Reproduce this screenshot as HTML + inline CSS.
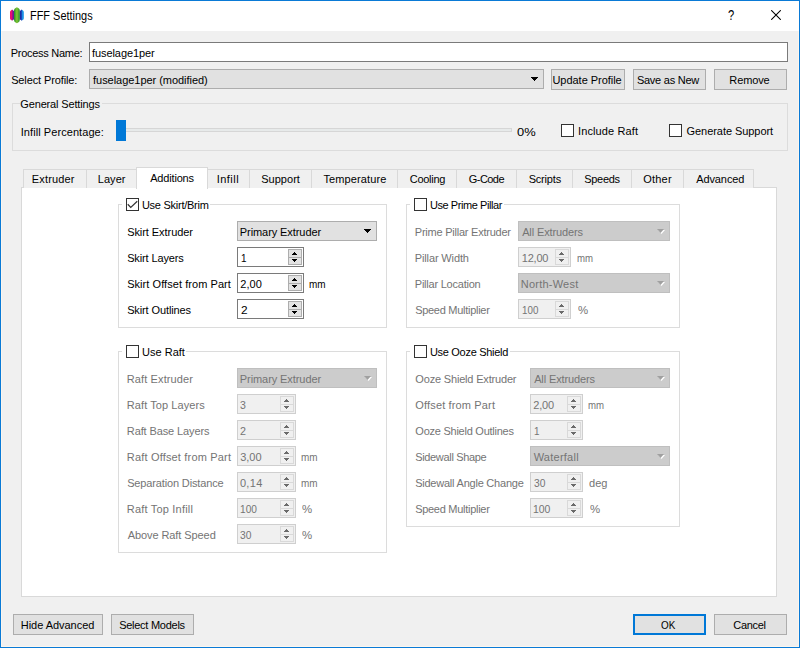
<!DOCTYPE html>
<html><head><meta charset="utf-8"><title>FFF Settings</title>
<style>
*{box-sizing:border-box;margin:0;padding:0}
html,body{width:800px;height:648px;overflow:hidden}
body{position:relative;background:#f0f0f0;font-family:"Liberation Sans",sans-serif;font-size:11px;color:#000}
.a{position:absolute}
.t{position:absolute;white-space:nowrap;line-height:14px;height:14px;z-index:4;transform-origin:0 0}
#frame{left:0;top:0;width:800px;height:648px;border:1px solid #0a7ad6;z-index:50}
#frame2{left:1px;top:1px;width:798px;height:646px;border:1px solid #fbf6ef;z-index:1}
#title{left:1px;top:1px;width:798px;height:30px;background:#fff;z-index:2}
.btn{position:absolute;height:21px;border:1px solid #adadad;background:#e1e1e1}
.combo{position:absolute;height:20px;border:1px solid #adadad;background:#e1e1e1}
.combo.d{background:#cccccc;border-color:#bfbfbf}
.cb{position:absolute;width:13px;height:13px;border:1px solid #333;background:#fff}
.cb svg{position:absolute;left:0;top:0}
.gb{position:absolute;border:1px solid #dcdcdc}
.spin{position:absolute;height:20px;border:1px solid #7a7a7a;background:#fff}
.spin.d{border-color:#cfcfcf;background:#f0f0f0}
.sb{position:absolute;right:1px;top:1px;width:14px;height:16px;border:1px solid #adadad;background:#e3e3e3}
.sb svg{position:absolute;left:0;top:0;fill:#000}
.sb::after{content:"";position:absolute;left:0;right:0;top:7px;height:1px;background:#adadad}
.spin.d .sb{border-color:#d9d9d9;background:#f0f0f0}
.spin.d .sb::after{background:#d9d9d9}
.spin.d .sb svg{fill:#6a6a6a}
.tab{position:absolute;top:169px;height:19px;border:1px solid #d9d9d9;border-bottom:none;background:#f0f0f0}
.tab.sel{top:167px;height:22px;background:#fff;z-index:3}
.pane{position:absolute;left:21px;top:187px;width:756px;height:410px;background:#fff;border:1px solid #d9d9d9}
</style></head><body>
<div class="a" id="frame2"></div>
<div class="a" id="title">
<svg class="a" style="left:8px;top:5px" width="16" height="20" viewBox="0 0 16 20">
<defs>
<linearGradient id="g1" x1="0" x2="1"><stop offset="0" stop-color="#d80f78"/><stop offset=".3" stop-color="#ff0a6c"/><stop offset=".65" stop-color="#8a1890"/><stop offset="1" stop-color="#5518a0"/></linearGradient>
<linearGradient id="g2" x1="0" x2="1"><stop offset="0" stop-color="#1f8c2c"/><stop offset=".5" stop-color="#86c832"/><stop offset="1" stop-color="#1f8c2c"/></linearGradient>
<linearGradient id="g3" x1="0" x2="1"><stop offset="0" stop-color="#1a1f98"/><stop offset=".4" stop-color="#1a38b0"/><stop offset=".75" stop-color="#18a4f2"/><stop offset="1" stop-color="#1688dc"/></linearGradient>
</defs>
<path d="M3.1 3.6L4 4.3Q5.2 4.7 5.2 6.2V12.2Q5.2 13.7 4 14.1L3.1 14.8L2.2 14.1Q1 13.7 1 12.2V6.2Q1 4.7 2.2 4.3Z" fill="url(#g1)"/>
<path d="M12.7 3.6L13.6 4.3Q14.8 4.7 14.8 6.2V12.2Q14.8 13.7 13.6 14.1L12.7 14.8L11.8 14.1Q10.6 13.7 10.6 12.2V6.2Q10.6 4.7 11.8 4.3Z" fill="url(#g3)"/>
<path d="M7.9 1.2L9.2 2Q10.8 2.6 10.8 4.6V13.8Q10.8 15.8 9.2 16.4L7.9 17.2L6.6 16.4Q5 15.8 5 13.8V4.6Q5 2.6 6.6 2Z" fill="url(#g2)"/>
</svg>
<div class="t" style="left:727.3px;top:7px;font-size:14px;transform:scaleX(.8);transform-origin:0 0">?</div>
<svg class="a" style="left:770px;top:9px" width="10" height="10" viewBox="0 0 10 10"><path d="M0.2 0.2L9.8 9.8M9.8 0.2L0.2 9.8" stroke="#000" stroke-width="1.05" fill="none"/></svg>
</div>

<div class="a" style="left:89px;top:42px;width:699px;height:20px;border:1px solid #7a7a7a;background:#fff"></div>
<div class="combo" style="left:89px;top:69px;width:455px"><svg class="a" style="right:5px;top:7px" width="7" height="4" viewBox="0 0 7 4" shape-rendering="crispEdges"><path d="M0 0h7v1h-1v1h-1v1h-1v1h-1v-1h-1v-1h-1v-1h-1z" fill="#000"/></svg></div>
<div class="btn" style="left:551px;top:69px;width:74px"></div>
<div class="btn" style="left:633px;top:69px;width:73px"></div>
<div class="btn" style="left:714px;top:69px;width:73px"></div>

<div class="gb" style="left:12px;top:103px;width:776px;height:48px"></div>
<div class="a" style="left:20px;top:97px;width:82px;height:12px;background:#f0f0f0"></div>
<div class="a" style="left:116px;top:128px;width:396px;height:4px;background:#e7eaea;border:1px solid #d6d6d6"></div>
<div class="a" style="left:116px;top:120px;width:10px;height:21px;background:#0078d7"></div>
<div class="cb" style="left:561px;top:124px"></div>
<div class="cb" style="left:669px;top:124px"></div>

<div class="pane"></div>
<div class="tab" style="left:23px;width:64px"></div>
<div class="tab" style="left:86px;width:51px"></div>
<div class="tab sel" style="left:136px;width:72px"></div>
<div class="tab" style="left:207px;width:43px"></div>
<div class="tab" style="left:249px;width:63px"></div>
<div class="tab" style="left:311px;width:87px"></div>
<div class="tab" style="left:397px;width:60px"></div>
<div class="tab" style="left:456px;width:61px"></div>
<div class="tab" style="left:516px;width:57px"></div>
<div class="tab" style="left:572px;width:60px"></div>
<div class="tab" style="left:631px;width:53px"></div>
<div class="tab" style="left:683px;width:71px"></div>

<div class="btn" style="left:13px;top:614px;width:90px"></div>
<div class="btn" style="left:111px;top:614px;width:83px"></div>
<div class="btn" style="left:633px;top:614px;width:73px;border:2px solid #0078d7"></div>
<div class="btn" style="left:714px;top:614px;width:73px"></div>
<div class="gb" style="left:118px;top:204px;width:269px;height:124px"></div>
<div class="a" style="left:122px;top:196px;width:88px;height:16px;background:#fff"></div>
<div class="cb" style="left:126px;top:198px"><svg width="11" height="11" viewBox="0 0 11 11" style="position:absolute;left:0;top:0"><path d="M0.75 5.25L3.75 8.5L10.25 2.25" stroke="#333" stroke-width="1.2" fill="none"/></svg></div>
<div class="combo" style="left:237px;top:221px;width:140px;height:20px"><svg class="a" style="right:5px;top:7px" width="7" height="4" viewBox="0 0 7 4" shape-rendering="crispEdges"><path d="M0 0h7v1h-1v1h-1v1h-1v1h-1v-1h-1v-1h-1v-1h-1z" fill="#000"/></svg></div>
<div class="spin" style="left:237px;top:247px;width:67px"><span class="sb"><svg width="12" height="14" viewBox="0 0 12 14" shape-rendering="crispEdges"><path d="M5 2h1v1h1v1h1v1h-5v-1h1v-1h1z M3 9h5v1h-1v1h-1v1h-1v-1h-1v-1h-1z"/></svg></span></div>
<div class="spin" style="left:237px;top:273px;width:67px"><span class="sb"><svg width="12" height="14" viewBox="0 0 12 14" shape-rendering="crispEdges"><path d="M5 2h1v1h1v1h1v1h-5v-1h1v-1h1z M3 9h5v1h-1v1h-1v1h-1v-1h-1v-1h-1z"/></svg></span></div>
<div class="spin" style="left:237px;top:299px;width:67px"><span class="sb"><svg width="12" height="14" viewBox="0 0 12 14" shape-rendering="crispEdges"><path d="M5 2h1v1h1v1h1v1h-5v-1h1v-1h1z M3 9h5v1h-1v1h-1v1h-1v-1h-1v-1h-1z"/></svg></span></div>
<div class="gb" style="left:406px;top:204px;width:274px;height:124px"></div>
<div class="a" style="left:410px;top:196px;width:94px;height:16px;background:#fff"></div>
<div class="cb" style="left:414px;top:198px"></div>
<div class="combo d" style="left:518px;top:221px;width:152px;height:20px"><svg class="a" style="right:4px;top:7px" width="8" height="5" viewBox="0 0 8 5"><path d="M1 1h7l-3.5 4z" fill="#fff"/><path d="M0 0h7l-3.5 4z" fill="#a0a0a0"/></svg></div>
<div class="spin d" style="left:518px;top:247px;width:53px"><span class="sb"><svg width="12" height="14" viewBox="0 0 12 14" shape-rendering="crispEdges"><path d="M5 2h1v1h1v1h1v1h-5v-1h1v-1h1z M3 9h5v1h-1v1h-1v1h-1v-1h-1v-1h-1z"/></svg></span></div>
<div class="combo d" style="left:518px;top:273px;width:152px;height:20px"><svg class="a" style="right:4px;top:7px" width="8" height="5" viewBox="0 0 8 5"><path d="M1 1h7l-3.5 4z" fill="#fff"/><path d="M0 0h7l-3.5 4z" fill="#a0a0a0"/></svg></div>
<div class="spin d" style="left:518px;top:299px;width:53px"><span class="sb"><svg width="12" height="14" viewBox="0 0 12 14" shape-rendering="crispEdges"><path d="M5 2h1v1h1v1h1v1h-5v-1h1v-1h1z M3 9h5v1h-1v1h-1v1h-1v-1h-1v-1h-1z"/></svg></span></div>
<div class="gb" style="left:118px;top:351px;width:269px;height:202px"></div>
<div class="a" style="left:122px;top:343px;width:64px;height:16px;background:#fff"></div>
<div class="cb" style="left:126px;top:345px"></div>
<div class="combo d" style="left:237px;top:368px;width:140px;height:20px"><svg class="a" style="right:4px;top:7px" width="8" height="5" viewBox="0 0 8 5"><path d="M1 1h7l-3.5 4z" fill="#fff"/><path d="M0 0h7l-3.5 4z" fill="#a0a0a0"/></svg></div>
<div class="spin d" style="left:237px;top:394px;width:59px"><span class="sb"><svg width="12" height="14" viewBox="0 0 12 14" shape-rendering="crispEdges"><path d="M5 2h1v1h1v1h1v1h-5v-1h1v-1h1z M3 9h5v1h-1v1h-1v1h-1v-1h-1v-1h-1z"/></svg></span></div>
<div class="spin d" style="left:237px;top:420px;width:59px"><span class="sb"><svg width="12" height="14" viewBox="0 0 12 14" shape-rendering="crispEdges"><path d="M5 2h1v1h1v1h1v1h-5v-1h1v-1h1z M3 9h5v1h-1v1h-1v1h-1v-1h-1v-1h-1z"/></svg></span></div>
<div class="spin d" style="left:237px;top:446px;width:59px"><span class="sb"><svg width="12" height="14" viewBox="0 0 12 14" shape-rendering="crispEdges"><path d="M5 2h1v1h1v1h1v1h-5v-1h1v-1h1z M3 9h5v1h-1v1h-1v1h-1v-1h-1v-1h-1z"/></svg></span></div>
<div class="spin d" style="left:237px;top:472px;width:59px"><span class="sb"><svg width="12" height="14" viewBox="0 0 12 14" shape-rendering="crispEdges"><path d="M5 2h1v1h1v1h1v1h-5v-1h1v-1h1z M3 9h5v1h-1v1h-1v1h-1v-1h-1v-1h-1z"/></svg></span></div>
<div class="spin d" style="left:237px;top:498px;width:59px"><span class="sb"><svg width="12" height="14" viewBox="0 0 12 14" shape-rendering="crispEdges"><path d="M5 2h1v1h1v1h1v1h-5v-1h1v-1h1z M3 9h5v1h-1v1h-1v1h-1v-1h-1v-1h-1z"/></svg></span></div>
<div class="spin d" style="left:237px;top:524px;width:59px"><span class="sb"><svg width="12" height="14" viewBox="0 0 12 14" shape-rendering="crispEdges"><path d="M5 2h1v1h1v1h1v1h-5v-1h1v-1h1z M3 9h5v1h-1v1h-1v1h-1v-1h-1v-1h-1z"/></svg></span></div>
<div class="gb" style="left:406px;top:351px;width:274px;height:176px"></div>
<div class="a" style="left:410px;top:343px;width:100px;height:16px;background:#fff"></div>
<div class="cb" style="left:414px;top:345px"></div>
<div class="combo d" style="left:530px;top:368px;width:140px;height:20px"><svg class="a" style="right:4px;top:7px" width="8" height="5" viewBox="0 0 8 5"><path d="M1 1h7l-3.5 4z" fill="#fff"/><path d="M0 0h7l-3.5 4z" fill="#a0a0a0"/></svg></div>
<div class="spin d" style="left:530px;top:394px;width:53px"><span class="sb"><svg width="12" height="14" viewBox="0 0 12 14" shape-rendering="crispEdges"><path d="M5 2h1v1h1v1h1v1h-5v-1h1v-1h1z M3 9h5v1h-1v1h-1v1h-1v-1h-1v-1h-1z"/></svg></span></div>
<div class="spin d" style="left:530px;top:420px;width:53px"><span class="sb"><svg width="12" height="14" viewBox="0 0 12 14" shape-rendering="crispEdges"><path d="M5 2h1v1h1v1h1v1h-5v-1h1v-1h1z M3 9h5v1h-1v1h-1v1h-1v-1h-1v-1h-1z"/></svg></span></div>
<div class="combo d" style="left:530px;top:446px;width:140px;height:20px"><svg class="a" style="right:4px;top:7px" width="8" height="5" viewBox="0 0 8 5"><path d="M1 1h7l-3.5 4z" fill="#fff"/><path d="M0 0h7l-3.5 4z" fill="#a0a0a0"/></svg></div>
<div class="spin d" style="left:530px;top:472px;width:53px"><span class="sb"><svg width="12" height="14" viewBox="0 0 12 14" shape-rendering="crispEdges"><path d="M5 2h1v1h1v1h1v1h-5v-1h1v-1h1z M3 9h5v1h-1v1h-1v1h-1v-1h-1v-1h-1z"/></svg></span></div>
<div class="spin d" style="left:530px;top:498px;width:53px"><span class="sb"><svg width="12" height="14" viewBox="0 0 12 14" shape-rendering="crispEdges"><path d="M5 2h1v1h1v1h1v1h-5v-1h1v-1h1z M3 9h5v1h-1v1h-1v1h-1v-1h-1v-1h-1z"/></svg></span></div>
<div class="t" style="left:30.39px;top:9px;font-size:12px;transform:scaleX(0.912);">FFF Settings</div>
<div class="t" style="left:10.80px;top:46px;letter-spacing:-0.287px;">Process Name:</div>
<div class="t" style="left:92.07px;top:46px;letter-spacing:-0.087px;">fuselage1per</div>
<div class="t" style="left:11.14px;top:73px;letter-spacing:-0.114px;">Select Profile:</div>
<div class="t" style="left:93.07px;top:73px;letter-spacing:-0.040px;">fuselage1per (modified)</div>
<div class="t" style="left:552.46px;top:73px;letter-spacing:-0.035px;">Update Profile</div>
<div class="t" style="left:636.88px;top:73px;letter-spacing:-0.248px;">Save as New</div>
<div class="t" style="left:729.30px;top:73px;letter-spacing:-0.108px;">Remove</div>
<div class="t" style="left:20.30px;top:97px;letter-spacing:-0.149px;">General Settings</div>
<div class="t" style="left:20.76px;top:125px;letter-spacing:0.066px;">Infill Percentage:</div>
<div class="t" style="left:517.07px;top:125px;transform:scaleX(1.173);">0%</div>
<div class="t" style="left:578.01px;top:124px;letter-spacing:0.115px;">Include Raft</div>
<div class="t" style="left:686.55px;top:124px;letter-spacing:-0.056px;">Generate Support</div>
<div class="t" style="left:31.80px;top:172px;letter-spacing:0.163px;z-index:5;">Extruder</div>
<div class="t" style="left:97.80px;top:172px;letter-spacing:0.035px;z-index:5;">Layer</div>
<div class="t" style="left:150.16px;top:171px;letter-spacing:-0.170px;z-index:5;">Additions</div>
<div class="t" style="left:216.76px;top:172px;letter-spacing:0.456px;z-index:5;">Infill</div>
<div class="t" style="left:261.13px;top:172px;letter-spacing:0.040px;z-index:5;">Support</div>
<div class="t" style="left:323.44px;top:172px;letter-spacing:0.117px;z-index:5;">Temperature</div>
<div class="t" style="left:409.77px;top:172px;letter-spacing:-0.282px;z-index:5;">Cooling</div>
<div class="t" style="left:468.80px;top:172px;letter-spacing:-0.562px;z-index:5;">G-Code</div>
<div class="t" style="left:528.63px;top:172px;letter-spacing:-0.180px;z-index:5;">Scripts</div>
<div class="t" style="left:584.13px;top:172px;letter-spacing:-0.262px;z-index:5;">Speeds</div>
<div class="t" style="left:643.33px;top:172px;letter-spacing:0.186px;z-index:5;">Other</div>
<div class="t" style="left:696.16px;top:172px;letter-spacing:-0.091px;z-index:5;">Advanced</div>
<div class="t" style="left:20.80px;top:618px;letter-spacing:-0.039px;">Hide Advanced</div>
<div class="t" style="left:119.14px;top:618px;letter-spacing:-0.263px;">Select Models</div>
<div class="t" style="left:661.38px;top:618px;transform:scaleX(0.897);">OK</div>
<div class="t" style="left:733.27px;top:618px;letter-spacing:-0.307px;">Cancel</div>
<div class="t" style="left:141.95px;top:198px;letter-spacing:-0.257px;">Use Skirt/Brim</div>
<div class="t" style="left:127.14px;top:225px;letter-spacing:-0.058px;">Skirt Extruder</div>
<div class="t" style="left:239.80px;top:225px;letter-spacing:-0.079px;">Primary Extruder</div>
<div class="t" style="left:127.14px;top:251px;letter-spacing:-0.121px;">Skirt Layers</div>
<div class="t" style="left:240.54px;top:251px;transform:scaleX(0.900);">1</div>
<div class="t" style="left:127.14px;top:277px;letter-spacing:0.059px;">Skirt Offset from Part</div>
<div class="t" style="left:240.31px;top:277px;letter-spacing:0.047px;">2,00</div>
<div class="t" style="left:309.19px;top:277px;transform:scaleX(0.903);">mm</div>
<div class="t" style="left:127.14px;top:303px;letter-spacing:-0.114px;">Skirt Outlines</div>
<div class="t" style="left:240.77px;top:303px;transform:scaleX(1.075);">2</div>
<div class="t" style="left:429.95px;top:198px;letter-spacing:-0.425px;">Use Prime Pillar</div>
<div class="t" style="left:414.80px;top:225px;letter-spacing:-0.231px;color:#747474;">Prime Pillar Extruder</div>
<div class="t" style="left:522.16px;top:225px;letter-spacing:-0.128px;color:#747474;">All Extruders</div>
<div class="t" style="left:414.80px;top:251px;letter-spacing:-0.137px;color:#747474;">Pillar Width</div>
<div class="t" style="left:521.71px;top:251px;letter-spacing:-0.192px;color:#747474;">12,00</div>
<div class="t" style="left:576.71px;top:251px;transform:scaleX(0.874);color:#747474;">mm</div>
<div class="t" style="left:414.80px;top:277px;letter-spacing:-0.227px;color:#747474;">Pillar Location</div>
<div class="t" style="left:520.80px;top:277px;letter-spacing:0.222px;color:#747474;">North-West</div>
<div class="t" style="left:415.13px;top:303px;letter-spacing:-0.277px;color:#747474;">Speed Multiplier</div>
<div class="t" style="left:521.83px;top:303px;transform:scaleX(0.891);color:#747474;">100</div>
<div class="t" style="left:577.92px;top:303px;transform:scaleX(1.036);color:#747474;">%</div>
<div class="t" style="left:141.95px;top:345px;letter-spacing:0.026px;">Use Raft</div>
<div class="t" style="left:126.80px;top:372px;letter-spacing:0.115px;color:#747474;">Raft Extruder</div>
<div class="t" style="left:239.80px;top:372px;letter-spacing:-0.079px;color:#747474;">Primary Extruder</div>
<div class="t" style="left:126.80px;top:398px;letter-spacing:0.073px;color:#747474;">Raft Top Layers</div>
<div class="t" style="left:240.25px;top:398px;transform:scaleX(0.959);color:#747474;">3</div>
<div class="t" style="left:126.80px;top:424px;letter-spacing:-0.109px;color:#747474;">Raft Base Layers</div>
<div class="t" style="left:240.32px;top:424px;transform:scaleX(0.978);color:#747474;">2</div>
<div class="t" style="left:126.80px;top:450px;letter-spacing:0.176px;color:#747474;">Raft Offset from Part</div>
<div class="t" style="left:240.23px;top:450px;letter-spacing:-0.043px;color:#747474;">3,00</div>
<div class="t" style="left:300.69px;top:450px;transform:scaleX(0.903);color:#747474;">mm</div>
<div class="t" style="left:127.14px;top:476px;letter-spacing:-0.138px;color:#747474;">Separation Distance</div>
<div class="t" style="left:239.89px;top:476px;letter-spacing:0.347px;color:#747474;">0,14</div>
<div class="t" style="left:300.69px;top:476px;transform:scaleX(0.903);color:#747474;">mm</div>
<div class="t" style="left:126.80px;top:502px;letter-spacing:0.194px;color:#747474;">Raft Top Infill</div>
<div class="t" style="left:240.30px;top:502px;transform:scaleX(0.921);color:#747474;">100</div>
<div class="t" style="left:301.92px;top:502px;transform:scaleX(1.036);color:#747474;">%</div>
<div class="t" style="left:127.66px;top:528px;letter-spacing:-0.079px;color:#747474;">Above Raft Speed</div>
<div class="t" style="left:240.27px;top:528px;transform:scaleX(0.933);color:#747474;">30</div>
<div class="t" style="left:301.92px;top:528px;transform:scaleX(1.036);color:#747474;">%</div>
<div class="t" style="left:429.95px;top:345px;letter-spacing:-0.299px;">Use Ooze Shield</div>
<div class="t" style="left:415.33px;top:372px;letter-spacing:-0.177px;color:#747474;">Ooze Shield Extruder</div>
<div class="t" style="left:534.16px;top:372px;letter-spacing:-0.128px;color:#747474;">All Extruders</div>
<div class="t" style="left:415.33px;top:398px;letter-spacing:0.145px;color:#747474;">Offset from Part</div>
<div class="t" style="left:533.31px;top:398px;letter-spacing:-0.177px;color:#747474;">2,00</div>
<div class="t" style="left:588.21px;top:398px;transform:scaleX(0.874);color:#747474;">mm</div>
<div class="t" style="left:415.33px;top:424px;letter-spacing:-0.248px;color:#747474;">Ooze Shield Outlines</div>
<div class="t" style="left:533.54px;top:424px;transform:scaleX(0.900);color:#747474;">1</div>
<div class="t" style="left:415.13px;top:450px;letter-spacing:-0.324px;color:#747474;">Sidewall Shape</div>
<div class="t" style="left:533.66px;top:450px;letter-spacing:0.242px;color:#747474;">Waterfall</div>
<div class="t" style="left:415.13px;top:476px;letter-spacing:-0.224px;color:#747474;">Sidewall Angle Change</div>
<div class="t" style="left:533.77px;top:476px;transform:scaleX(0.933);color:#747474;">30</div>
<div class="t" style="left:588.83px;top:476px;transform:scaleX(1.005);color:#747474;">deg</div>
<div class="t" style="left:415.13px;top:502px;letter-spacing:-0.277px;color:#747474;">Speed Multiplier</div>
<div class="t" style="left:533.27px;top:502px;transform:scaleX(0.950);color:#747474;">100</div>
<div class="t" style="left:589.92px;top:502px;transform:scaleX(1.036);color:#747474;">%</div>
<div class="a" id="frame"></div>
</body></html>
